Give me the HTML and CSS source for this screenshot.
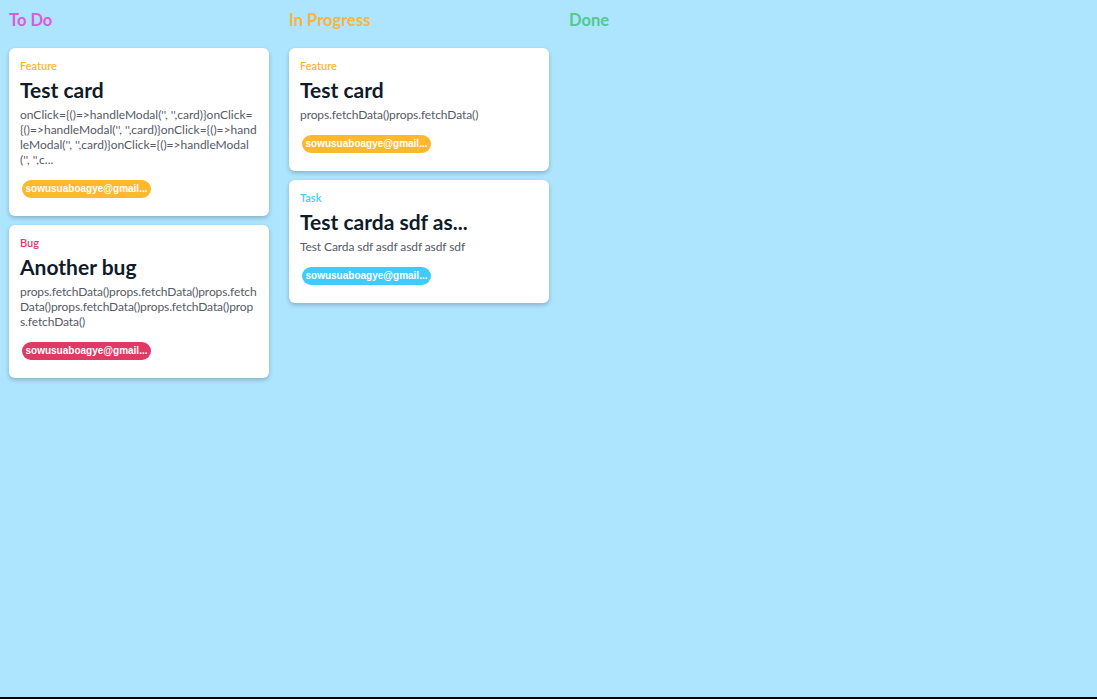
FILE: index.html
```html
<!DOCTYPE html>
<html lang="en">
<head>
<meta charset="utf-8">
<title>Board</title>
<link rel="stylesheet" href="styles.css">
</head>
<body>
<div class="board">
  <section class="column">
    <h2 class="column-title todo">To Do</h2>
    <div class="cards">
      <article class="card">
        <div class="card-type feature">Feature</div>
        <h3 class="card-title">Test card</h3>
        <p class="card-desc card-desc-code">onClick={()=&gt;handleModal('', '',card)}onClick={()=&gt;handleModal('', '',card)}onClick={()=&gt;handleModal('', '',card)}onClick={()=&gt;handleModal('', '',c...</p>
        <span class="badge badge-feature">sowusuaboagye@gmail...</span>
      </article>
      <article class="card">
        <div class="card-type bug">Bug</div>
        <h3 class="card-title">Another bug</h3>
        <p class="card-desc">props.fetchData()props.fetchData()props.fetchData()props.fetchData()props.fetchData()props.fetchData()</p>
        <span class="badge badge-bug">sowusuaboagye@gmail...</span>
      </article>
    </div>
  </section>
  <section class="column">
    <h2 class="column-title progress">In Progress</h2>
    <div class="cards">
      <article class="card">
        <div class="card-type feature">Feature</div>
        <h3 class="card-title">Test card</h3>
        <p class="card-desc">props.fetchData()props.fetchData()</p>
        <span class="badge badge-feature">sowusuaboagye@gmail...</span>
      </article>
      <article class="card">
        <div class="card-type task">Task</div>
        <h3 class="card-title">Test carda sdf as...</h3>
        <p class="card-desc">Test Carda sdf asdf asdf asdf sdf</p>
        <span class="badge badge-task">sowusuaboagye@gmail...</span>
      </article>
    </div>
  </section>
  <section class="column">
    <h2 class="column-title done">Done</h2>
    <div class="cards"></div>
  </section>
</div>
</body>
</html>
```
FILE: styles.css
```css
html {
  background: #000;
}
body {
  margin: 0;
  font-family: "Lato", "Noto Sans", sans-serif;
}
.board {
  box-sizing: border-box;
  height: 697px;
  background: #ade4fe;
  padding: 9px 9px;
  display: flex;
  gap: 20px;
  align-items: flex-start;
}
.column {
  width: 260px;
  display: flex;
  flex-direction: column;
}
.column-title {
  margin: 0;
  font-size: 16.5px;
  line-height: 22px;
  font-weight: 700;
  height: 22px;
}
.todo { color: #dc5bdc; }
.progress { color: #fbb43a; }
.done { color: #4ecb8e; }
.cards {
  margin-top: 17px;
  display: flex;
  flex-direction: column;
  gap: 9px;
}
.card {
  background: #fff;
  border-radius: 6px;
  box-shadow: 0 2px 4px rgba(0, 0, 0, 0.22);
  padding: 11px 11px 18px;
  display: flex;
  flex-direction: column;
  align-items: flex-start;
}
.card-type {
  font-size: 11px;
  line-height: 14px;
  font-weight: 600;
}
.feature { color: #fbb533; }
.bug { color: #e0386a; }
.task { color: #47cdfb; }
.card-title {
  margin: 4px 0 0;
  font-size: 21px;
  line-height: 25px;
  font-weight: 700;
  color: #0f1b2a;
}
.card-desc {
  margin: 5px 0 0;
  font-size: 12px;
  line-height: 15px;
  letter-spacing: -0.1px;
  color: #555a66;
  word-break: break-all;
}
.card-desc-code {
  letter-spacing: 0;
}
.badge {
  margin-top: 13px;
  margin-left: 2px;
  box-sizing: border-box;
  width: 129px;
  height: 18px;
  border-radius: 9px;
  color: #fff;
  font-family: "Liberation Sans", Arial, sans-serif;
  font-weight: 700;
  font-size: 10px;
  line-height: 18px;
  text-align: center;
  white-space: nowrap;
  overflow: hidden;
}
.badge-feature { background: #fdb92e; }
.badge-bug { background: #de3a65; }
.badge-task { background: #3fcbfc; }
```
